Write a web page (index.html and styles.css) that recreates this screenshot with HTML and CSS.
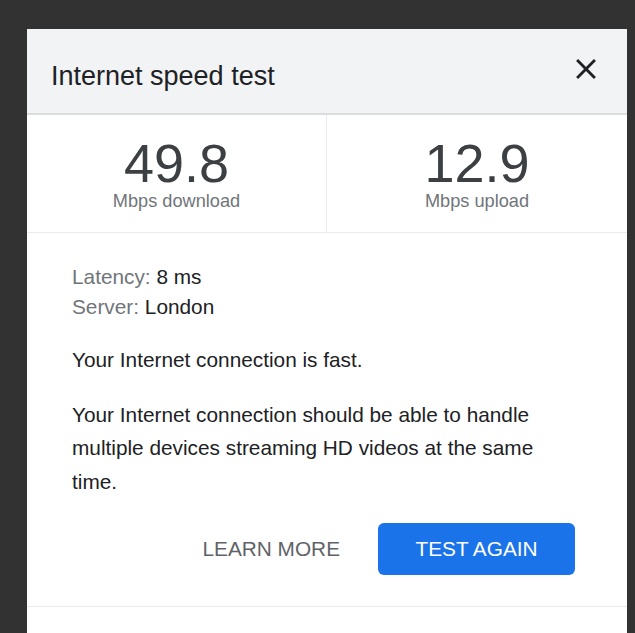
FILE: index.html
```html
<!DOCTYPE html>
<html lang="en">
<head>
<meta charset="utf-8">
<title>Internet speed test</title>
<link rel="stylesheet" href="styles.css">
</head>
<body>
<div class="page">
  <section class="card">
    <header class="card-header">
      <h1 class="title">Internet speed test</h1>
      <button class="close" aria-label="Close">
        <svg viewBox="0 0 24 24" width="34" height="34"><path d="M19 6.41L17.59 5 12 10.59 6.41 5 5 6.41 10.59 12 5 17.59 6.41 19 12 13.41 17.59 19 19 17.59 13.41 12z" fill="#202124"/></svg>
      </button>
    </header>
    <div class="stats">
      <div class="stat stat-left">
        <div class="stat-value">49.8</div>
        <div class="stat-label">Mbps download</div>
      </div>
      <div class="stat">
        <div class="stat-value">12.9</div>
        <div class="stat-label">Mbps upload</div>
      </div>
    </div>
    <div class="body">
      <div class="info">
        <div><span class="info-label">Latency:</span> 8 ms</div>
        <div><span class="info-label">Server:</span> London</div>
      </div>
      <p class="text">Your Internet connection is fast.</p>
      <p class="text">Your Internet connection should be able to handle multiple devices streaming HD videos at the same time.</p>
      <div class="actions">
        <button class="btn-text">LEARN MORE</button>
        <button class="btn-primary">TEST AGAIN</button>
      </div>
    </div>
    <div class="footer"></div>
  </section>
</div>
</body>
</html>
```

FILE: styles.css
```css
html, body {
  margin: 0;
  padding: 0;
  background: #323232;
  height: 100%;
  overflow: hidden;
}

.page {
  padding: 29px 8px 0 27px;
  font-family: "Liberation Sans", Arial, sans-serif;
}

.card {
  width: 600px;
  background: #ffffff;
  min-height: 620px;
}

.card-header {
  height: 84px;
  background: #f1f3f4;
  border-bottom: 2px solid #dadce0;
  display: flex;
  justify-content: space-between;
  align-items: flex-start;
  padding: 0 24px 0 24px;
  box-sizing: content-box;
}

.title {
  margin: 32px 0 0 0;
  font-size: 27px;
  line-height: 31px;
  font-weight: normal;
  color: #202124;
}

.close {
  margin-top: 23px;
  width: 34px;
  height: 34px;
  padding: 0;
  border: 0;
  background: transparent;
  display: flex;
}

.stats {
  display: grid;
  grid-template-columns: 1fr 1fr;
  border-bottom: 1px solid #ebebeb;
}

.stat {
  padding: 23px 0 20px;
  text-align: center;
}

.stat-left {
  border-right: 1px solid #ebebeb;
}

.stat-value {
  font-size: 54px;
  line-height: 50px;
  color: #3c4043;
}

.stat-label {
  margin-top: 2px;
  font-size: 18.2px;
  line-height: 22px;
  color: #70757a;
}

.body {
  padding: 29px 45px 31px;
  border-bottom: 1px solid #ebebeb;
  color: #202124;
  font-size: 20.8px;
}

.info {
  line-height: 30px;
}

.info-label {
  color: #70757a;
}

.text {
  margin: 21px 0 0 0;
  line-height: 33.5px;
}

.actions {
  display: flex;
  justify-content: flex-end;
  align-items: center;
  gap: 22px;
  margin-top: 24.5px;
  margin-right: 7px;
}

.btn-text,
.btn-primary {
  font-family: "Liberation Sans", Arial, sans-serif;
  font-size: 20.8px;
  border: 0;
  cursor: pointer;
}

.btn-text {
  background: transparent;
  color: #5f6368;
  padding: 0 16px;
  height: 52px;
}

.btn-primary {
  width: 197px;
  height: 52px;
  background: #1a73e8;
  color: #ffffff;
  border-radius: 6px;
}

.footer {
  height: 40px;
}
```
